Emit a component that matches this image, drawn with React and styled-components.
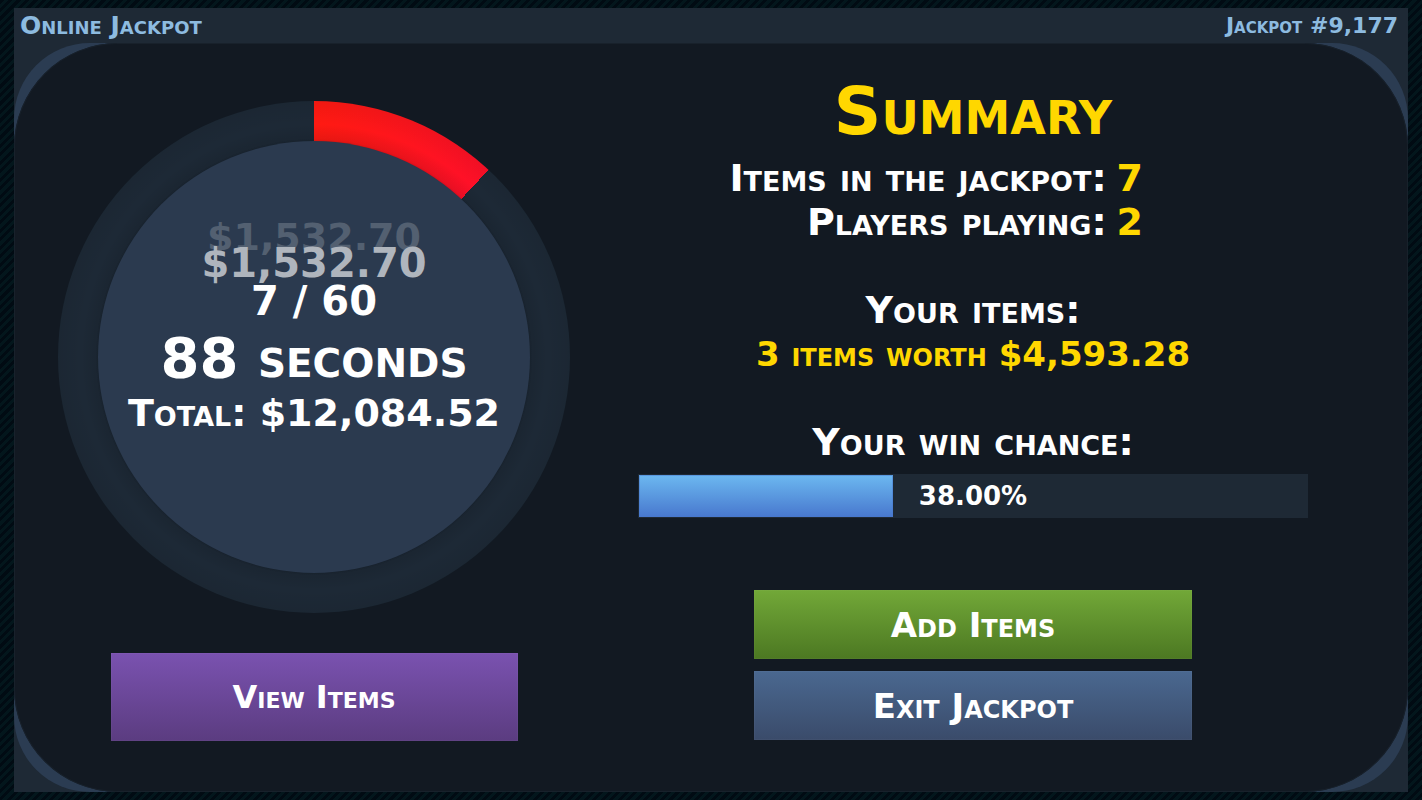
import React from 'react';
import styled, { createGlobalStyle } from 'styled-components';

const GlobalStyle = createGlobalStyle`
  * { box-sizing: border-box; }
  body {
    margin: 0;
    color: #fff;
    font-family: 'DejaVu Sans', Verdana, sans-serif;
    font-weight: 700;
    font-variant: small-caps;
    background: repeating-linear-gradient(135deg, #010b13 0 3px, #03161c 3px 6px);
  }
`;

const Page = styled.div`
  display: flex;
  min-height: 100vh;
  padding: 8px 14px;
`;

const Frame = styled.div`
  flex: 1;
  display: flex;
  flex-direction: column;
  background: #1e2935;
`;

const Header = styled.header`
  display: flex;
  justify-content: space-between;
  align-items: center;
  height: 35px;
  padding: 0 10px 0 6px;
  color: #8dbbe0;
  white-space: nowrap;
`;

const HeaderTitle = styled.h1`
  margin: 0;
  font-size: 25px;
  line-height: 35px;
`;

const RoundNumber = styled.span`
  font-size: 22px;
  line-height: 35px;
`;

const Rim = styled.div`
  flex: 1;
  display: flex;
  background: #2b3c52;
  border-radius: 76px;
`;

const Panel = styled.main`
  flex: 1;
  display: grid;
  grid-template-columns: 600fr 718fr;
  align-items: start;
  padding: 36px 76px 51px 0;
  background: #121922;
  border-radius: 104px;
  box-shadow: inset 0 0 0 1px #18212b;
`;

const PotColumn = styled.section`
  display: flex;
  flex-direction: column;
  align-items: center;
  gap: 40px;
  padding-top: 22px;
`;

const Ring = styled.div`
  display: flex;
  width: 512px;
  height: 512px;
  padding: 40px;
  border-radius: 50%;
  background:
    radial-gradient(circle closest-side, rgba(0, 0, 0, 0.1) 84%, transparent 91%, rgba(0, 0, 0, 0.06) 100%),
    conic-gradient(#ff1a12 0deg, #ff1028 ${(p) => p.$angle}deg, #1d2936 ${(p) => p.$angle}deg);
`;

const RingFace = styled.div`
  flex: 1;
  display: flex;
  flex-direction: column;
  align-items: center;
  padding-top: 83px;
  border-radius: 50%;
  background: #2b3a4f;
  box-shadow: 0 0 2px rgba(0, 0, 0, 0.2);
  white-space: nowrap;
`;

const Deposit = styled.div`
  font-size: ${(p) => (p.$fading ? 38 : 40)}px;
  line-height: 26px;
  color: ${(p) => (p.$fading ? '#536071' : '#afb5bd')};
`;

const ItemCount = styled.div`
  font-size: 40px;
  line-height: 50px;
`;

const Countdown = styled.div`
  font-size: 56px;
  line-height: 64px;
`;

const Total = styled.div`
  font-size: 38px;
  line-height: 46px;
`;

const ActionButton = styled.button`
  width: 100%;
  max-width: ${(p) => (p.$tall ? 407 : 438)}px;
  height: ${(p) => (p.$tall ? 88 : 69)}px;
  padding: 0;
  border: 1px solid rgba(255, 255, 255, 0.03);
  background: linear-gradient(${(p) => p.$from}, ${(p) => p.$to}) border-box;
  color: #fff;
  font: inherit;
  font-size: ${(p) => (p.$tall ? 32 : 34)}px;
  cursor: pointer;
`;

const SummaryColumn = styled.section`
  display: flex;
  flex-direction: column;
  align-items: center;
  padding: 0 24px;
  white-space: nowrap;
`;

const SummaryTitle = styled.h2`
  margin: 0 0 11px;
  color: #ffd700;
  font-size: 66px;
  line-height: 66px;
`;

const Stats = styled.dl`
  display: grid;
  grid-template-columns: 71fr 29fr;
  column-gap: 10px;
  width: 100%;
  margin: 0 0 44px;
  font-size: 38px;
  line-height: 44px;
`;

const StatLabel = styled.dt`
  text-align: right;
`;

const StatValue = styled.dd`
  margin: 0;
  color: #ffd700;
`;

const Heading = styled.h3`
  margin: 0;
  font-size: 38px;
  line-height: 44px;
`;

const Worth = styled.p`
  margin: 0 0 44px;
  color: #ffd700;
  font-size: 34px;
  line-height: 44px;
`;

const ChanceBar = styled.div`
  display: grid;
  align-items: stretch;
  width: 100%;
  height: 44px;
  margin: 10px 0 72px;
  padding: 1px;
  background: #1e2935;

  > * { grid-area: 1 / 1; }
`;

const ChanceFill = styled.div`
  border: 1px solid rgba(72, 120, 206, 0.5);
  background: linear-gradient(#6cb8f0, #4878ce) border-box;
`;

const ChanceValue = styled.span`
  font-size: 26px;
  line-height: 42px;
  text-align: center;
`;

const Actions = styled.div`
  display: flex;
  flex-direction: column;
  align-items: center;
  gap: 12px;
  width: 100%;
`;

const game = { items: 7, capacity: 60, chance: 38 };

export default function App() {
  return (
    <>
      <GlobalStyle />
      <Page>
        <Frame>
          <Header>
            <HeaderTitle>Online Jackpot</HeaderTitle>
            <RoundNumber>Jackpot #9,177</RoundNumber>
          </Header>
          <Rim>
            <Panel>
              <PotColumn>
                <Ring $angle={(game.items / game.capacity) * 360 + 1}>
                  <RingFace>
                    <Deposit $fading>$1,532.70</Deposit>
                    <Deposit>$1,532.70</Deposit>
                    <ItemCount>{`${game.items} / ${game.capacity}`}</ItemCount>
                    <Countdown>88 seconds</Countdown>
                    <Total>Total: $12,084.52</Total>
                  </RingFace>
                </Ring>
                <ActionButton $tall $from="#7a52b0" $to="#5b3c80">View Items</ActionButton>
              </PotColumn>
              <SummaryColumn>
                <SummaryTitle>Summary</SummaryTitle>
                <Stats>
                  <StatLabel>Items in the jackpot:</StatLabel>
                  <StatValue>{game.items}</StatValue>
                  <StatLabel>Players playing:</StatLabel>
                  <StatValue>2</StatValue>
                </Stats>
                <Heading>Your items:</Heading>
                <Worth>3 items worth $4,593.28</Worth>
                <Heading id="chance">Your win chance:</Heading>
                <ChanceBar
                  role="progressbar"
                  aria-labelledby="chance"
                  aria-valuemin={0}
                  aria-valuemax={100}
                  aria-valuenow={game.chance}
                >
                  <ChanceFill style={{ width: `${game.chance}%` }} />
                  <ChanceValue>{`${game.chance.toFixed(2)}%`}</ChanceValue>
                </ChanceBar>
                <Actions>
                  <ActionButton $from="#72a838" $to="#4c7822">Add Items</ActionButton>
                  <ActionButton $from="#4a6890" $to="#3a4b6a">Exit Jackpot</ActionButton>
                </Actions>
              </SummaryColumn>
            </Panel>
          </Rim>
        </Frame>
      </Page>
    </>
  );
}
